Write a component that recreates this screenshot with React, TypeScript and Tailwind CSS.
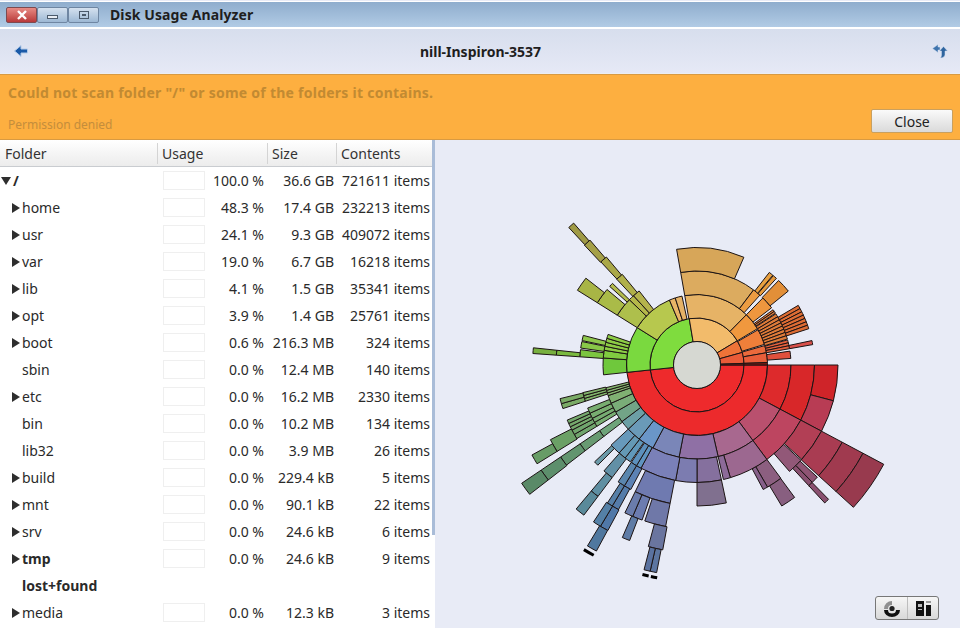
import React from "react";

const rows = [
  { name: "/", pct: "100.0 %", size: "36.6 GB", items: "721611 items", arrow: "down", bold: true },
  { name: "home", pct: "48.3 %", size: "17.4 GB", items: "232213 items", arrow: "right" },
  { name: "usr", pct: "24.1 %", size: "9.3 GB", items: "409072 items", arrow: "right" },
  { name: "var", pct: "19.0 %", size: "6.7 GB", items: "16218 items", arrow: "right" },
  { name: "lib", pct: "4.1 %", size: "1.5 GB", items: "35341 items", arrow: "right" },
  { name: "opt", pct: "3.9 %", size: "1.4 GB", items: "25761 items", arrow: "right" },
  { name: "boot", pct: "0.6 %", size: "216.3 MB", items: "324 items", arrow: "right" },
  { name: "sbin", pct: "0.0 %", size: "12.4 MB", items: "140 items" },
  { name: "etc", pct: "0.0 %", size: "16.2 MB", items: "2330 items", arrow: "right" },
  { name: "bin", pct: "0.0 %", size: "10.2 MB", items: "134 items" },
  { name: "lib32", pct: "0.0 %", size: "3.9 MB", items: "26 items" },
  { name: "build", pct: "0.0 %", size: "229.4 kB", items: "5 items", arrow: "right" },
  { name: "mnt", pct: "0.0 %", size: "90.1 kB", items: "22 items", arrow: "right" },
  { name: "srv", pct: "0.0 %", size: "24.6 kB", items: "6 items", arrow: "right" },
  { name: "tmp", pct: "0.0 %", size: "24.6 kB", items: "9 items", arrow: "right", bold: true },
  { name: "lost+found", bold: true },
  { name: "media", pct: "0.0 %", size: "12.3 kB", items: "3 items", arrow: "right" },
];

// ring, start angle, end angle, colour, stripes (degrees clockwise from east)
type Seg = [number, number, number, string, number?];

const segments: Seg[] = [
  // home
  [1, 0, 174, "#ee2a2c"],
  [2, 0, 174, "#ec2a2c"],
  [3, 0, 28, "#dd2a2c"],
  [4, 0, 28, "#d82729"],
  [5, 0, 14.7, "#cf2429"],
  [5, 14.7, 28, "#b83c54"],
  [3, 28, 53.5, "#b9506e"],
  [4, 28, 53.5, "#bd4560"],
  [5, 28, 42, "#b23f55"],
  [6, 28, 42.3, "#a93c52"],
  [7, 28, 42.3, "#a03a4f"],
  [8, 28, 42.3, "#983a4e"],
  [5, 42.5, 49, "#925878"],
  [6, 43, 45.5, "#8f5474"],
  [6, 45.5, 47.2, "#885070"],
  [7, 45.6, 47.2, "#8a5070"],
  [5, 53.5, 60, "#8c5f80"],
  [5, 60, 62, "#86608a"],
  [6, 53.6, 59, "#885f80"],
  [3, 53.5, 77, "#a8688f"],
  [4, 53.5, 73.5, "#9c6890"],
  [4, 73.5, 77, "#8c6a98"],
  [3, 77, 101, "#8f70a5"],
  [4, 78, 90, "#85709e"],
  [5, 78, 90, "#80708f"],
  [4, 90, 100.5, "#7c7cb0"],
  [3, 101, 118, "#7a86b8"],
  [3, 118, 128, "#6a96c8"],
  [3, 128, 137, "#6a9ab8"],
  [4, 100.5, 118.5, "#7a80b8"],
  [5, 101, 116, "#6f7ab0"],
  [6, 101, 108.5, "#6f78a8"],
  [6, 109.5, 113, "#6c7cb0"],
  [6, 113, 116, "#6a7cac"],
  [7, 100.5, 105, "#6a759f"],
  [7, 111, 113.4, "#5f7ca6"],
  [8, 101, 102.8, "#5c75a0"],
  [8, 102.8, 104.5, "#5a72a0"],
  [4, 118.5, 121, "#5f94c0"],
  [4, 121, 124, "#5c90bc"],
  [5, 118, 121, "#5c82b4"],
  [5, 121, 124, "#5a86ae"],
  [6, 118.5, 121, "#557caa"],
  [6, 121, 123, "#5780a8"],
  [7, 118.3, 120.9, "#5078a8"],
  [7, 120.9, 123.4, "#5480a6"],
  [8, 118.4, 121.2, "#50789f"],
  [4, 124.5, 127.7, "#6098ba"],
  [4, 127.7, 131.5, "#6499b5"],
  [5, 127, 131.3, "#6290a6"],
  [6, 127, 130, "#5f8fa2"],
  [7, 127, 130, "#5a8a9a"],
  [4, 131.5, 137, "#6799bb"],
  [5, 134.7, 136.6, "#6a99a8"],
  // etc side of usr fan
  [3, 137, 143, "#6c9fa5"],
  [3, 143, 150, "#72a487"],
  [3, 150, 156, "#7aad78"],
  [3, 156, 161, "#80b172"],
  [3, 161, 166, "#85b570", 3],
  [4, 142.5, 146, "#6ea47a"],
  [5, 142.5, 146, "#689a72"],
  [6, 142.5, 146, "#62956f"],
  [7, 142.3, 146, "#5d8f6c"],
  [8, 142.3, 146, "#5a8a68"],
  [4, 148.5, 153, "#77ad72", 2],
  [4, 153, 158.5, "#78ad70", 2],
  [5, 148.5, 152.5, "#70a56d", 2],
  [5, 152.5, 157, "#75a86d", 3],
  [6, 148.3, 153, "#6ba066"],
  [7, 148.3, 151.4, "#679c66"],
  [4, 162, 166.4, "#80b36a", 3],
  [5, 162, 166.2, "#7aab66", 2],
  // usr
  [1, 174, 260.5, "#7fdc3e"],
  [2, 174, 212, "#7ad93f"],
  [3, 174, 184.3, "#6fc83c"],
  [3, 184.3, 189, "#80cc40"],
  [3, 189, 199, "#8ccc45", 4],
  [4, 184, 187.5, "#7cc540"],
  [5, 184, 186, "#7ab93f"],
  [6, 184, 186, "#78b03f"],
  [4, 188.3, 191.5, "#88c848"],
  [4, 192, 194.6, "#8ec84c"],
  [2, 212, 247, "#b7c84e"],
  [3, 212, 224, "#aebf4c"],
  [4, 212, 220, "#aabb48"],
  [5, 212, 218, "#a8b545"],
  [4, 222, 224, "#b3bb4c"],
  [3, 224, 227.5, "#b5b84a"],
  [3, 227.5, 232, "#b5b34c"],
  [4, 226.9, 230.5, "#b0b04a"],
  [5, 227, 230, "#aaa848"],
  [6, 226.8, 229.4, "#a5a047"],
  [7, 227, 229, "#9f9a45"],
  [2, 247, 252, "#e8b467"],
  [2, 252, 257.7, "#e5b267"],
  // var
  [1, 260.5, 329, "#f2bb6b"],
  [2, 260, 314.5, "#e6b366"],
  [3, 260, 307, "#dcab5f"],
  [4, 260, 293.5, "#d7a659"],
  [2, 314.5, 329, "#f0983e"],
  [3, 307, 312, "#ec9c42"],
  [4, 308, 310.2, "#e8a040"],
  [4, 310.5, 312.5, "#e89c3e"],
  [3, 314.5, 322.5, "#ee963e"],
  [4, 314, 321, "#e28f38"],
  [3, 324, 326.5, "#e87f3a", 2],
  // lib
  [1, 329, 344.5, "#ee7338"],
  [2, 330, 343, "#ef7f3a"],
  [3, 327, 344, "#dd7a38", 8],
  [4, 329.5, 342, "#dd6c33", 7],
  // opt
  [1, 344.5, 358, "#ea5b38"],
  [2, 344, 350, "#eb6a3c"],
  [2, 350, 358, "#e85e3a"],
  [3, 344.5, 350, "#e2603c", 3],
  [3, 351.5, 356, "#e0503c"],
  [4, 348, 350, "#d9504a"],
  // boot
  [1, 358, 360, "#7a1a12"],
  [2, 358, 360, "#7a1a12"],
];

const cx = 697;
const cy = 365;
const band = 23.5;

function pt(r: number, a: number) {
  const t = (a * Math.PI) / 180;
  return `${(cx + r * Math.cos(t)).toFixed(2)} ${(cy + r * Math.sin(t)).toFixed(2)}`;
}

function wedge(r0: number, r1: number, a0: number, a1: number) {
  const big = a1 - a0 > 180 ? 1 : 0;
  return `M${pt(r0, a0)}A${r0} ${r0} 0 ${big} 1 ${pt(r0, a1)}L${pt(r1, a1)}A${r1} ${r1} 0 ${big} 0 ${pt(r1, a0)}Z`;
}

function Sunburst() {
  const parts: { d: string; fill: string }[] = [];
  segments.forEach(([i, a0, a1, fill, n]) => {
    const count = n ?? 1;
    const step = (a1 - a0) / count;
    for (let k = 0; k < count; k++) {
      parts.push({ d: wedge(i * band, (i + 1) * band, a0 + k * step, a0 + (k + 1) * step), fill });
    }
  });
  return (
    <svg viewBox="435 140 525 488" className="block h-full w-full">
      {parts.map((p, idx) => (
        <path key={idx} d={p.d} fill={p.fill} stroke="#1c1414" strokeWidth="1" strokeLinejoin="round" />
      ))}
      <circle cx={cx} cy={cy} r={band} fill="#d6d8d2" stroke="#1c1414" strokeWidth="1" />
      {/* tiny clipped entries past the outer ring */}
      <path d={wedge(215, 218, 118.5, 121.5)} fill="#000" />
      <path d={wedge(215, 218, 102.9, 104.6)} fill="#000" />
      <path d={wedge(215, 218, 100.6, 102.3)} fill="#000" />
    </svg>
  );
}

function Arrow({ dir }: { dir?: string }) {
  if (dir === "down") {
    return (
      <svg width="10" height="10" viewBox="0 0 10 10" className="shrink-0">
        <path d="M0 1h10L5 9z" fill="#2e2e2e" />
      </svg>
    );
  }
  if (dir === "right") {
    return (
      <svg width="8" height="10" viewBox="0 0 8 10" className="shrink-0">
        <path d="M0 0l8 5-8 5z" fill="#2e2e2e" />
      </svg>
    );
  }
  return <span className="w-2 shrink-0" />;
}

function WinButton({ children, className }: { children: React.ReactNode; className: string }) {
  return (
    <div className={`flex h-[16px] w-[31px] items-center justify-center rounded-[2px] border ${className}`}>
      {children}
    </div>
  );
}

export default function App() {
  return (
    <div
      className="flex h-[628px] w-[960px] flex-col overflow-hidden bg-[#e8ebf6] text-[14px] text-[#2a2a2a]"
      style={{ fontFamily: '"Noto Sans", sans-serif' }}
    >
      {/* title bar */}
      <div className="mt-[1px] flex h-[28px] shrink-0 items-center border-t border-b-2 border-t-white border-b-white bg-gradient-to-b from-[#8fadcd] to-[#b1cbe5] pl-[6px]">
        <div className="flex">
          <WinButton className="border-[#7d4a50] bg-gradient-to-b from-[#e88a84] to-[#b8383a]">
            <svg width="12" height="10" viewBox="0 0 12 10">
              <path d="M2 1l8 8M10 1L2 9" stroke="#fff" strokeWidth="2.4" />
            </svg>
          </WinButton>
          <WinButton className="border-[#6f86a2] bg-gradient-to-b from-[#d5e1ef] to-[#9db8d4]">
            <div className="mt-[4px] h-[4px] w-[11px] border border-[#4b5a6c] bg-[#e9eef5]" />
          </WinButton>
          <WinButton className="border-[#6f86a2] bg-gradient-to-b from-[#d5e1ef] to-[#9db8d4]">
            <div className="flex h-[8px] w-[10px] items-center justify-center border border-[#4b5a6c]">
              <div className="h-[2px] w-[4px] bg-[#4b5a6c]" />
            </div>
          </WinButton>
        </div>
        <span className="ml-[11px] text-[14px] font-bold tracking-[0.1px] text-[#1e1e1e]">Disk Usage Analyzer</span>
      </div>

      {/* toolbar */}
      <div className="flex h-[45px] shrink-0 items-center justify-between border-b border-b-[#eceef2] bg-gradient-to-b from-[#d7deed] to-[#e6e9f6] pl-[13px] pr-[12px]">
        <svg width="16" height="14" viewBox="0 0 16 14">
          <path d="M1.5 7L8 1.5V5H14.5V9H8V12.5z" fill="#1a5aa8" stroke="#b4cbe8" strokeWidth="1" />
        </svg>
        <span className="text-[14px] font-bold text-[#1e1e1e]">nill-Inspiron-3537</span>
        <svg width="16" height="16" viewBox="0 0 16 16">
          <path d="M0.5 5.5L6 1.5V4H8V7H6V9.5z" fill="#3f74ad" stroke="#d3dff0" strokeWidth="0.5" />
          <path d="M15.5 8L11.5 3.5 7.5 8H9.5V12C9.5 13 9 14 8.5 15 11 15 13 13.5 13 11.5V8z" fill="#2f659f" stroke="#d3dff0" strokeWidth="0.5" />
        </svg>
      </div>

      {/* info bar */}
      <div className="flex h-[66px] shrink-0 flex-col border-y border-y-[#d89a42] bg-[#fdaf40] pl-[8px] pr-[7px]">
        <div className="mt-[7px] text-[14px] font-bold tracking-[0.25px] text-[#c28a32]">
          Could not scan folder "/" or some of the folders it contains.
        </div>
        <div className="flex flex-1 items-end justify-between pb-[6px]">
          <span className="-mb-[1px] text-[12px] text-[#c48d3c]">Permission denied</span>
          <button className="h-[24px] w-[82px] rounded-[2px] border border-[#c9a05f] bg-gradient-to-b from-[#fafafa] to-[#dadada] text-[14px] text-[#222]">
            Close
          </button>
        </div>
      </div>

      <div className="flex min-h-0 flex-1">
        {/* folder tree */}
        <div className="flex w-[435px] shrink-0 bg-white">
          <div className="w-[432px] shrink-0">
            <div className="flex h-[27px] items-center border-b border-b-[#c9ccd0] bg-gradient-to-b from-white to-[#ececec] text-[14px] text-[#333]">
              <div className="w-[158px] border-r border-r-[#d4d4d4] pl-[5px]">Folder</div>
              <div className="w-[110px] border-r border-r-[#d4d4d4] pl-[4px]">Usage</div>
              <div className="w-[69px] border-r border-r-[#d4d4d4] pl-[4px]">Size</div>
              <div className="pl-[4px]">Contents</div>
            </div>
            {rows.map((r, i) => (
              <div key={r.name} className="flex h-[27px] items-center text-[14px]">
                <div className={`flex w-[163px] shrink-0 items-center gap-[2px] ${i === 0 ? "pl-[1px]" : "pl-[12px]"}`}>
                  <Arrow dir={r.arrow} />
                  <span className={r.bold ? "font-bold" : ""}>{r.name}</span>
                </div>
                {r.pct && (
                  <>
                    <div className="h-[19px] w-[42px] shrink-0 border border-[#efefef] bg-white" />
                    <div className="w-[59px] shrink-0 text-right">{r.pct}</div>
                    <div className="w-[70px] shrink-0 text-right">{r.size}</div>
                    <div className="w-[96px] shrink-0 text-right">{r.items}</div>
                  </>
                )}
              </div>
            ))}
          </div>
          <div className="h-[395px] w-[3px] shrink-0 bg-[#a9bcd8]" />
        </div>

        {/* chart */}
        <div className="relative flex-1">
          <Sunburst />
          <div className="absolute bottom-[8px] right-[21px] flex h-[24px] w-[64px] rounded-[3px] border border-[#777] bg-gradient-to-b from-[#f6f6f6] to-[#d9d9d9]">
            <div className="flex w-[32px] items-center justify-center border-r border-r-[#bdbdbd] pt-[2px]">
              <svg width="18" height="16" viewBox="0 0 18 16">
                <path d="M9 0a8 8 0 0 0-8 8l4 0a4 4 0 0 1 4-4z" fill="#8f8f8f" />
                <path d="M1 9a8 7 0 0 0 16 0h-4a4 3.5 0 0 1-8 0z" fill="#111" />
                <circle cx="9" cy="7.5" r="2.6" fill="#222" />
              </svg>
            </div>
            <div className="flex flex-1 items-center justify-center">
              <svg width="15" height="15" viewBox="0 0 15 15">
                <path d="M0 0h8v15H0z" fill="#111" />
                <path d="M2 3h4v3H2zM2 8h4v1H2z" fill="#bbb" />
                <path d="M10 0h5v2h-5z" fill="#999" />
                <path d="M10 4h5v11h-5z" fill="#111" />
              </svg>
            </div>
          </div>
        </div>
      </div>
    </div>
  );
}
